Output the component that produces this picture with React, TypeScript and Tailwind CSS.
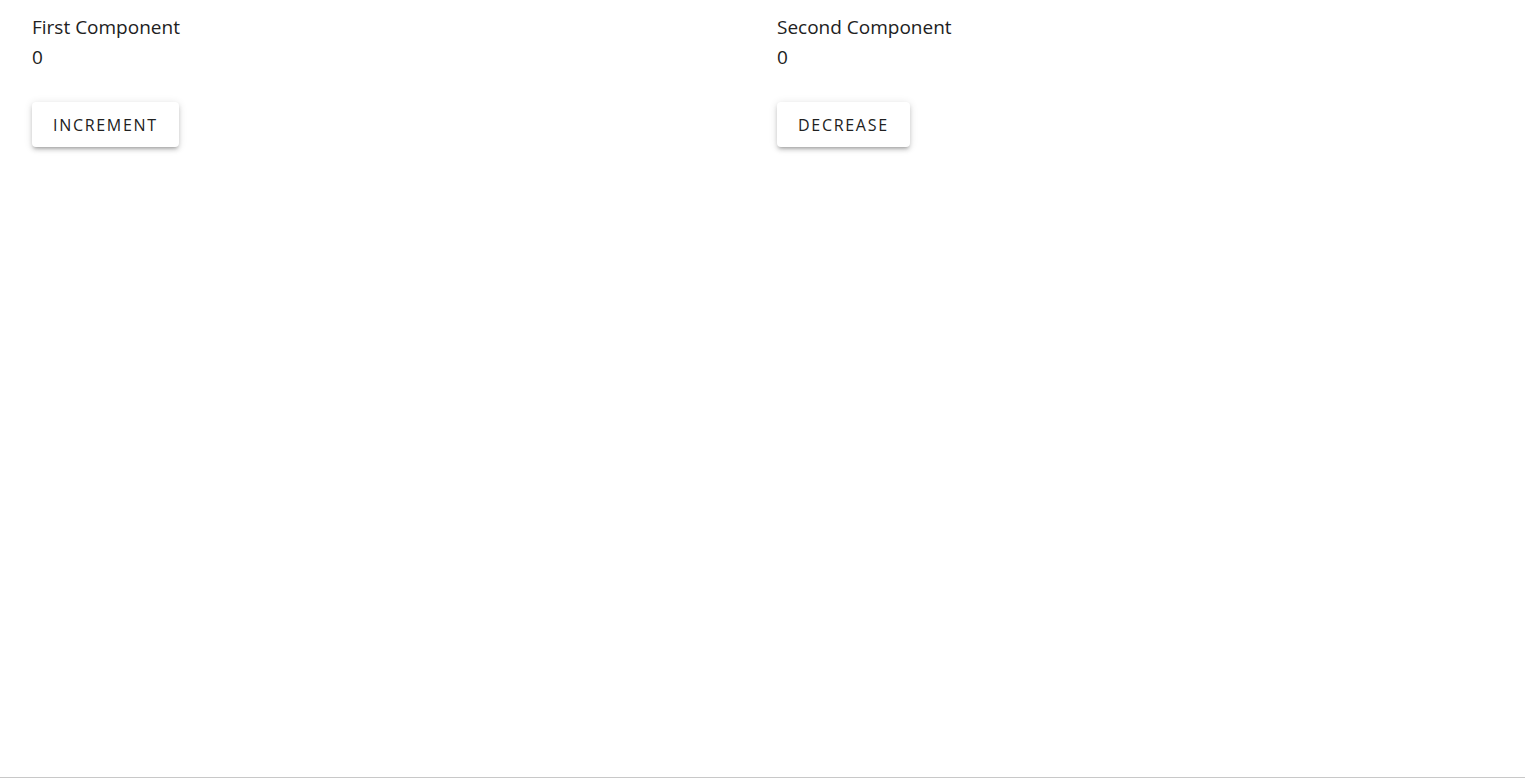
import React, { useState } from "react";

function Counter({
  title,
  label,
  step,
}: {
  title: string;
  label: string;
  step: number;
}): JSX.Element {
  const [count, setCount] = useState(0);

  return (
    <div className="flex flex-col items-start">
      <div className="text-[19px] leading-[30px] text-[#212121]">{title}</div>
      <div className="text-[19px] leading-[30px] text-[#212121]">{count}</div>
      <button
        className="mt-[30px] h-[45px] px-[21px] bg-white rounded-[4px] text-[16px] tracking-[1.7px] text-[#212121] shadow-[0_3px_3px_-2px_rgba(0,0,0,0.2),0_3px_4px_0_rgba(0,0,0,0.14),0_1px_8px_0_rgba(0,0,0,0.12)]"
        onClick={() => setCount(count + step)}
      >
        {label}
      </button>
    </div>
  );
}

export default function App(): JSX.Element {
  return (
    <div
      className="h-[778px] bg-white border-b border-[#c8c8c8] box-border"
      style={{ fontFamily: '"Open Sans", "Noto Sans", sans-serif' }}
    >
      <div className="grid grid-cols-[745px_1fr] pl-8 pt-[12px]">
        <Counter title="First Component" label="INCREMENT" step={1} />
        <Counter title="Second Component" label="DECREASE" step={-1} />
      </div>
    </div>
  );
}
